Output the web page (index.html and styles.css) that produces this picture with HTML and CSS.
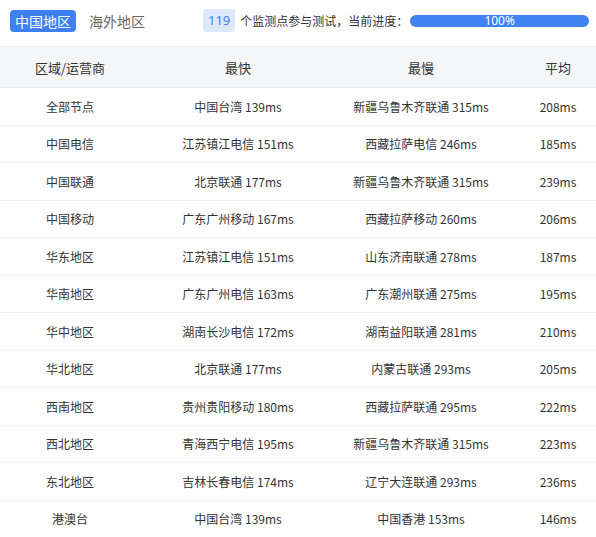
FILE: index.html
```html
<!DOCTYPE html>
<html lang="zh-CN">
<head>
<meta charset="utf-8">
<link rel="stylesheet" href="styles.css">
</head>
<body>
<div class="top">
  <div class="tabs">
    <span class="tab active">中国地区</span>
    <span class="tab">海外地区</span>
  </div>
  <span class="badge">119</span>
  <span class="info">个监测点参与测试，当前进度：</span>
  <div class="progress"><div class="bar" style="width:100%">100%</div></div>
</div>
<div class="table">
  <div class="row head"><div>区域/运营商</div><div>最快</div><div>最慢</div><div>平均</div></div>
  <div class="row"><div>全部节点</div><div>中国台湾 139ms</div><div>新疆乌鲁木齐联通 315ms</div><div>208ms</div></div>
  <div class="row"><div>中国电信</div><div>江苏镇江电信 151ms</div><div>西藏拉萨电信 246ms</div><div>185ms</div></div>
  <div class="row"><div>中国联通</div><div>北京联通 177ms</div><div>新疆乌鲁木齐联通 315ms</div><div>239ms</div></div>
  <div class="row"><div>中国移动</div><div>广东广州移动 167ms</div><div>西藏拉萨移动 260ms</div><div>206ms</div></div>
  <div class="row"><div>华东地区</div><div>江苏镇江电信 151ms</div><div>山东济南联通 278ms</div><div>187ms</div></div>
  <div class="row"><div>华南地区</div><div>广东广州电信 163ms</div><div>广东潮州联通 275ms</div><div>195ms</div></div>
  <div class="row"><div>华中地区</div><div>湖南长沙电信 172ms</div><div>湖南益阳联通 281ms</div><div>210ms</div></div>
  <div class="row"><div>华北地区</div><div>北京联通 177ms</div><div>内蒙古联通 293ms</div><div>205ms</div></div>
  <div class="row"><div>西南地区</div><div>贵州贵阳移动 180ms</div><div>西藏拉萨联通 295ms</div><div>222ms</div></div>
  <div class="row"><div>西北地区</div><div>青海西宁电信 195ms</div><div>新疆乌鲁木齐联通 315ms</div><div>223ms</div></div>
  <div class="row"><div>东北地区</div><div>吉林长春电信 174ms</div><div>辽宁大连联通 293ms</div><div>236ms</div></div>
  <div class="row"><div>港澳台</div><div>中国台湾 139ms</div><div>中国香港 153ms</div><div>146ms</div></div>
</div>
</body>
</html>
```

FILE: styles.css
```css
html, body {
  margin: 0;
  padding: 0;
  background: #fff;
  font-family: "Noto Sans CJK SC", "Noto Sans", sans-serif;
  color: #333;
  overflow: hidden;
}
.top {
  display: flex;
  align-items: center;
  height: 41px;
  padding: 0 7px 0 10px;
  box-sizing: border-box;
}
.tabs {
  display: flex;
  align-items: center;
  gap: 13px;
}
.tab {
  font-size: 14px;
  line-height: 22px;
  color: #666;
  border-radius: 4px;
}
.tab.active {
  background: #3f7ff5;
  color: #fff;
  padding: 0 5px;
}
.badge {
  margin-left: 58px;
  background: #dde8fd;
  color: #3f7ff5;
  font-size: 13px;
  line-height: 23px;
  padding: 0 5px;
  border-radius: 3px;
  font-family: "Noto Sans", sans-serif;
}
.info {
  margin-left: 5px;
  font-size: 12px;
  color: #333;
}
.progress {
  margin-left: 2px;
  flex: 1;
  height: 12px;
  border-radius: 6px;
  background: #e6ecf5;
}
.bar {
  height: 12px;
  background: #4283f3;
  color: #fff;
  font-size: 12px;
  line-height: 12px;
  text-align: center;
  border-radius: 6px;
  font-family: "Noto Sans", sans-serif;
}
.table {
  margin-top: 5px;
}
.row {
  display: grid;
  grid-template-columns: 140px 196px 170px 90px;
  height: 37.5px;
  align-items: center;
  border-bottom: 1px solid #ebeef2;
  box-sizing: border-box;
  font-size: 12px;
  color: #333;
}
.row > div {
  text-align: center;
  white-space: nowrap;
}
.row > div:last-child {
  padding-left: 14px;
}
.row.head {
  height: 42px;
  background: #f5f6f7;
  border-top: 1px solid #ebeef2;
  font-size: 13px;
}
```
